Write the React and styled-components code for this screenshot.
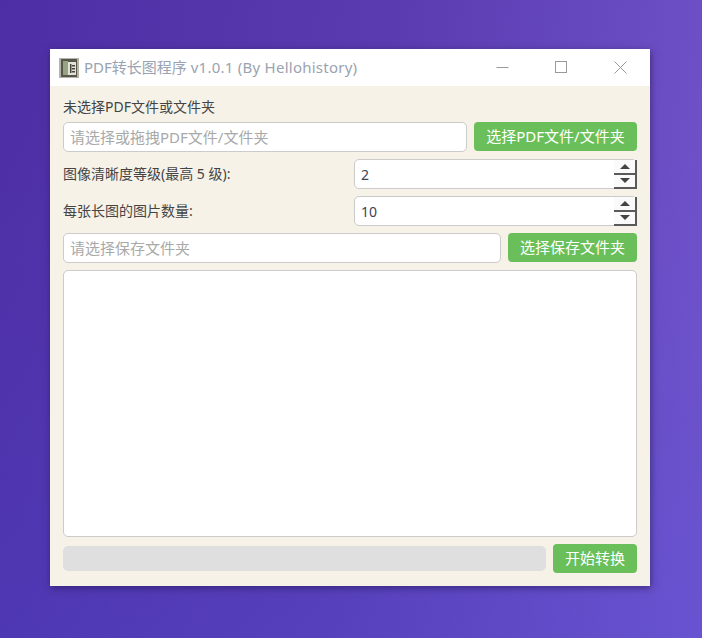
import React from "react";
import styled, { createGlobalStyle } from "styled-components";

const Global = createGlobalStyle`
  html, body { margin: 0; padding: 0; height: 100%; }
  #root { height: 100%; }
`;

const FONT = `"Noto Sans", "Noto Sans CJK SC", sans-serif`;

const Desktop = styled.div`
  width: 702px;
  height: 638px;
  overflow: hidden;
  background:
    linear-gradient(to bottom, rgba(70, 80, 225, 0) 20%, rgba(70, 80, 225, 0.22) 100%),
    linear-gradient(97deg, #4e2ea4 0%, #5a3bb0 50%, #7254cb 100%);
  padding: 49px 52px 52px 50px;
  box-sizing: border-box;
  font-family: ${FONT};
`;

const Window = styled.div`
  width: 600px;
  height: 537px;
  background: #f6f2e8;
  display: flex;
  flex-direction: column;
  box-shadow: 1px 2px 7px rgba(30, 20, 70, 0.55);
`;

const TitleBar = styled.div`
  height: 37px;
  flex: none;
  background: #fff;
  display: flex;
  align-items: center;
  padding-left: 9px;
`;

const TitleText = styled.div`
  margin-left: 5px;
  padding-bottom: 2px;
  font-size: 15px;
  color: #9aa3b1;
  white-space: nowrap;
  flex: 1;
`;

const TitleVersion = styled.span`
  letter-spacing: 0.25px;
`;

const WinButton = styled.div`
  width: 59px;
  height: 37px;
  display: flex;
  align-items: center;
  justify-content: center;
`;

const Body = styled.div`
  flex: 1;
  display: flex;
  flex-direction: column;
  padding: 12px 13px 13px;
  min-height: 0;
`;

const Label = styled.div`
  font-size: 14px;
  line-height: 18px;
  color: #444;
  white-space: nowrap;
`;

const Row = styled.div`
  display: flex;
  align-items: ${(p) => p.$align ?? "flex-start"};
  gap: 7px;
  margin-top: ${(p) => p.$top ?? 7}px;
  height: ${(p) => p.$height ?? 30}px;
  flex: none;
`;

const TextInput = styled.div`
  flex: 1;
  height: 30px;
  box-sizing: border-box;
  background: #fff;
  border: 1px solid #cbcbcb;
  border-radius: 5px;
  padding: 0 6px 2px;
  display: flex;
  align-items: center;
  font-size: 15px;
  color: #a9a9a9;
  white-space: nowrap;
`;

const GreenButton = styled.div`
  width: ${(p) => p.$width}px;
  height: 29px;
  flex: none;
  box-sizing: border-box;
  padding-bottom: 2px;
  background: #6abf5a;
  border-radius: 4px;
  color: #fff;
  font-size: 15px;
  display: flex;
  align-items: center;
  justify-content: center;
  white-space: nowrap;
`;

const SpinLabel = styled(Label)`
  flex: 1;
`;

const Spin = styled.div`
  width: 283px;
  height: 30px;
  flex: none;
  box-sizing: border-box;
  background: #fff;
  border: 1px solid #cbcbcb;
  border-radius: 5px;
  display: flex;
  align-items: stretch;
  justify-content: space-between;
  padding-left: 6px;
  position: relative;
`;

const SpinValue = styled.div`
  font-size: 14px;
  color: #3a4358;
  align-self: center;
`;

const SpinButtons = styled.div`
  position: absolute;
  right: -1px;
  top: 0;
  bottom: -1px;
  width: 23px;
  display: flex;
  flex-direction: column;
  border-right: 2px solid #5a5a5a;
  border-bottom: 2px solid #5a5a5a;
  box-sizing: border-box;
`;

const SpinButton = styled.div`
  flex: 1;
  display: flex;
  align-items: center;
  justify-content: center;
  border-bottom: ${(p) => (p.$up ? "2px solid #5a5a5a" : "none")};
  background: #fafafa;
`;

const Arrow = styled.div`
  width: 0;
  height: 0;
  border-left: 5px solid transparent;
  border-right: 5px solid transparent;
  ${(p) => (p.$up ? "border-bottom: 5px solid #444;" : "border-top: 5px solid #444;")}
`;

const LogArea = styled.div`
  flex: 1;
  margin-top: 7px;
  background: #fff;
  border: 1px solid #cbcbcb;
  border-radius: 5px;
  min-height: 0;
`;

const Progress = styled.div`
  flex: 1;
  height: 25px;
  background: #dfdfdf;
  border-radius: 5px;
`;

function AppIcon() {
  return (
    <svg width="20" height="20" viewBox="0 0 20 20" style={{ flex: "none" }}>
      <rect x="0" y="0" width="20" height="20" fill="#b4b4a8" />
      <rect x="2" y="1" width="16" height="18" fill="#56564a" />
      <rect x="4" y="3" width="5" height="14" fill="#98a284" />
      <rect x="9" y="4" width="8" height="13" fill="#e2e2d6" />
      <rect x="11" y="6" width="1.5" height="9" fill="#44443a" />
      <rect x="13" y="7" width="3" height="1.5" fill="#44443a" />
      <rect x="13" y="10" width="3" height="1.5" fill="#44443a" />
      <rect x="13" y="13" width="3" height="1.5" fill="#44443a" />
    </svg>
  );
}

function SpinBox({ value }) {
  return (
    <Spin>
      <SpinValue>{value}</SpinValue>
      <SpinButtons>
        <SpinButton $up>
          <Arrow $up />
        </SpinButton>
        <SpinButton>
          <Arrow />
        </SpinButton>
      </SpinButtons>
    </Spin>
  );
}

export default function App() {
  return (
    <>
      <Global />
      <Desktop>
        <Window>
          <TitleBar>
            <AppIcon />
            <TitleText>
              PDF转长图程序 <TitleVersion>v1.0.1 (By Hellohistory)</TitleVersion>
            </TitleText>
            <WinButton>
              <svg width="13" height="13" viewBox="0 0 13 13">
                <path d="M0.5 6.5H12.5" stroke="#9a9a9a" strokeWidth="1" fill="none" />
              </svg>
            </WinButton>
            <WinButton>
              <svg width="13" height="13" viewBox="0 0 13 13">
                <rect x="0.5" y="0.5" width="11" height="11" stroke="#9a9a9a" strokeWidth="1" fill="none" />
              </svg>
            </WinButton>
            <WinButton>
              <svg width="13" height="13" viewBox="0 0 13 13">
                <path d="M0.5 0.5L12.5 12.5M12.5 0.5L0.5 12.5" stroke="#9a9a9a" strokeWidth="1" fill="none" />
              </svg>
            </WinButton>
          </TitleBar>
          <Body>
            <Label>未选择PDF文件或文件夹</Label>
            <Row $top={6}>
              <TextInput>请选择或拖拽PDF文件/文件夹</TextInput>
              <GreenButton $width={163}>选择PDF文件/文件夹</GreenButton>
            </Row>
            <Row $align="center">
              <SpinLabel>图像清晰度等级(最高 5 级):</SpinLabel>
              <SpinBox value="2" />
            </Row>
            <Row $align="center">
              <SpinLabel>每张长图的图片数量:</SpinLabel>
              <SpinBox value="10" />
            </Row>
            <Row>
              <TextInput>请选择保存文件夹</TextInput>
              <GreenButton $width={129}>选择保存文件夹</GreenButton>
            </Row>
            <LogArea />
            <Row $top={7} $height={29} $align="center">
              <Progress />
              <GreenButton $width={84}>开始转换</GreenButton>
            </Row>
          </Body>
        </Window>
      </Desktop>
    </>
  );
}
